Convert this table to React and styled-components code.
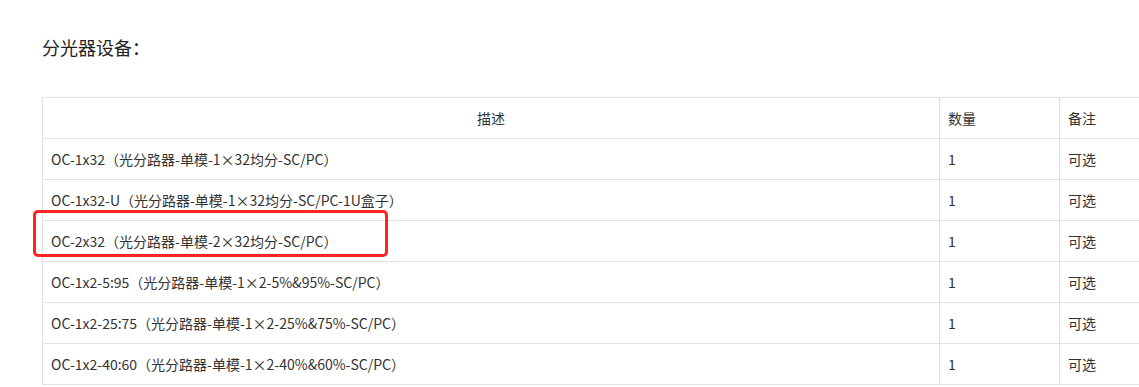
import React from "react";
import styled, { createGlobalStyle } from "styled-components";

const GlobalStyle = createGlobalStyle`
  html, body {
    margin: 0;
    padding: 0;
    background: #fff;
    overflow: hidden;
  }
  body {
    font-family: "Noto Sans CJK SC", "Noto Sans", sans-serif;
    color: #333;
  }
`;

const rows = [
  "OC-1x32（光分路器-单模-1×32均分-SC/PC）",
  "OC-1x32-U（光分路器-单模-1×32均分-SC/PC-1U盒子）",
  "OC-2x32（光分路器-单模-2×32均分-SC/PC）",
  "OC-1x2-5:95（光分路器-单模-1×2-5%&95%-SC/PC）",
  "OC-1x2-25:75（光分路器-单模-1×2-25%&75%-SC/PC）",
  "OC-1x2-40:60（光分路器-单模-1×2-40%&60%-SC/PC）",
];

const App = () => {
  return (
    <Page>
      <GlobalStyle />
      <Title>分光器设备：</Title>
      <TableWrap>
        <Table>
          <colgroup>
            <col style={{ width: 897 }} />
            <col style={{ width: 120 }} />
            <col />
          </colgroup>
          <thead>
            <tr>
              <Th center>描述</Th>
              <Th>数量</Th>
              <Th>备注</Th>
            </tr>
          </thead>
          <tbody>
            {rows.map((r) => (
              <tr key={r}>
                <Td>{r}</Td>
                <Td>1</Td>
                <Td>可选</Td>
              </tr>
            ))}
          </tbody>
        </Table>
        <Highlight />
      </TableWrap>
    </Page>
  );
};

const Page = styled.div`
  box-sizing: border-box;
  width: 1139px;
  height: 387px;
  overflow: hidden;
  padding: 34px 0 0 42px;
`;

const Title = styled.div`
  font-size: 18px;
  line-height: 27px;
  color: #222;
  margin-bottom: 36px;
`;

const TableWrap = styled.div`
  position: relative;
`;

const Table = styled.table`
  border-collapse: collapse;
  table-layout: fixed;
  width: 1140px;
  font-size: 14px;
`;

const Th = styled.th`
  height: 40px;
  padding: 0 8px;
  border: 1px solid #e2e2e2;
  font-weight: normal;
  text-align: ${(p) => (p.center ? "center" : "left")};
  color: #333;
`;

const Td = styled.td`
  height: 40px;
  padding: 0 8px;
  border: 1px solid #e2e2e2;
  color: #333;
  white-space: nowrap;
`;

const Highlight = styled.div`
  position: absolute;
  left: -9px;
  top: 113px;
  width: 355px;
  height: 47px;
  box-sizing: border-box;
  border: 3px solid #ff2424;
  border-radius: 5px;
  pointer-events: none;
`;

export default App;
